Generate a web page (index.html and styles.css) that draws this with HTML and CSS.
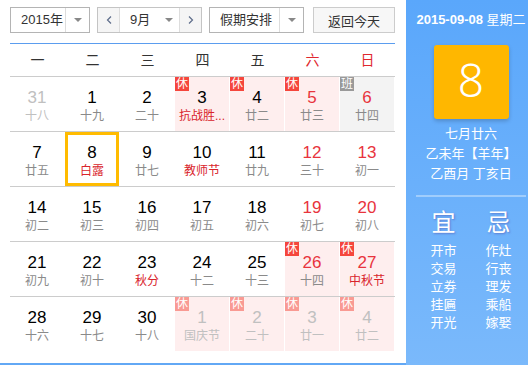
FILE: index.html
```html
<!DOCTYPE html>
<html lang="zh-CN">
<head>
    <meta charset="UTF-8">
    <meta name="viewport" content="width=device-width, initial-scale=1.0">
    <title>万年历</title>
    <link rel="stylesheet" href="styles.css">
</head>
<body>

<div class="calendar">
    <div class="main">
        <div class="toolbar">
            <div class="select year">
                <span class="value">2015年</span>
                <span class="arrow"><i class="caret"></i></span>
            </div>
            <div class="select month">
                <span class="step">
                    <svg width="6" height="10" viewBox="0 0 6 10"><polyline points="5,1.5 1.5,5 5,8.5" fill="none" stroke="#5d6c8a" stroke-width="1.2"/></svg>
                </span>
                <span class="value">9月<i class="caret"></i></span>
                <span class="step">
                    <svg width="6" height="10" viewBox="0 0 6 10"><polyline points="1,1.5 4.5,5 1,8.5" fill="none" stroke="#5d6c8a" stroke-width="1.2"/></svg>
                </span>
            </div>
            <div class="select holiday">
                <span class="value">假期安排</span>
                <span class="arrow"><i class="caret"></i></span>
            </div>
            <button class="today-btn">返回今天</button>
        </div>

        <div class="weekdays">
            <span>一</span><span>二</span><span>三</span><span>四</span><span>五</span>
            <span class="red">六</span><span class="red">日</span>
        </div>

        <!-- 第一周 -->
        <div class="week">
            <div class="day other"><div class="num">31</div><div class="lunar">十八</div></div>
            <div class="day"><div class="num">1</div><div class="lunar">十九</div></div>
            <div class="day"><div class="num">2</div><div class="lunar">二十</div></div>
            <div class="day rest"><span class="badge">休</span><div class="num">3</div><div class="lunar festival">抗战胜...</div></div>
            <div class="day rest"><span class="badge">休</span><div class="num">4</div><div class="lunar">廿二</div></div>
            <div class="day rest weekend"><span class="badge">休</span><div class="num">5</div><div class="lunar">廿三</div></div>
            <div class="day work weekend"><span class="badge">班</span><div class="num">6</div><div class="lunar">廿四</div></div>
        </div>

        <!-- 第二周 -->
        <div class="week">
            <div class="day"><div class="num">7</div><div class="lunar">廿五</div></div>
            <div class="day today"><div class="num">8</div><div class="lunar festival">白露</div></div>
            <div class="day"><div class="num">9</div><div class="lunar">廿七</div></div>
            <div class="day"><div class="num">10</div><div class="lunar festival">教师节</div></div>
            <div class="day"><div class="num">11</div><div class="lunar">廿九</div></div>
            <div class="day weekend"><div class="num">12</div><div class="lunar">三十</div></div>
            <div class="day weekend"><div class="num">13</div><div class="lunar">初一</div></div>
        </div>

        <!-- 第三周 -->
        <div class="week">
            <div class="day"><div class="num">14</div><div class="lunar">初二</div></div>
            <div class="day"><div class="num">15</div><div class="lunar">初三</div></div>
            <div class="day"><div class="num">16</div><div class="lunar">初四</div></div>
            <div class="day"><div class="num">17</div><div class="lunar">初五</div></div>
            <div class="day"><div class="num">18</div><div class="lunar">初六</div></div>
            <div class="day weekend"><div class="num">19</div><div class="lunar">初七</div></div>
            <div class="day weekend"><div class="num">20</div><div class="lunar">初八</div></div>
        </div>

        <!-- 第四周 -->
        <div class="week">
            <div class="day"><div class="num">21</div><div class="lunar">初九</div></div>
            <div class="day"><div class="num">22</div><div class="lunar">初十</div></div>
            <div class="day"><div class="num">23</div><div class="lunar festival">秋分</div></div>
            <div class="day"><div class="num">24</div><div class="lunar">十二</div></div>
            <div class="day"><div class="num">25</div><div class="lunar">十三</div></div>
            <div class="day rest weekend"><span class="badge">休</span><div class="num">26</div><div class="lunar">十四</div></div>
            <div class="day rest weekend"><span class="badge">休</span><div class="num">27</div><div class="lunar festival">中秋节</div></div>
        </div>

        <!-- 第五周 -->
        <div class="week">
            <div class="day"><div class="num">28</div><div class="lunar">十六</div></div>
            <div class="day"><div class="num">29</div><div class="lunar">十七</div></div>
            <div class="day"><div class="num">30</div><div class="lunar">十八</div></div>
            <div class="day rest other"><span class="badge">休</span><div class="num">1</div><div class="lunar">国庆节</div></div>
            <div class="day rest other"><span class="badge">休</span><div class="num">2</div><div class="lunar">二十</div></div>
            <div class="day rest other"><span class="badge">休</span><div class="num">3</div><div class="lunar">廿一</div></div>
            <div class="day rest other"><span class="badge">休</span><div class="num">4</div><div class="lunar">廿二</div></div>
        </div>
    </div>

    <div class="side">
        <div class="side-date"><b>2015-09-08</b> 星期二</div>
        <div class="big-day">8</div>
        <div class="lunar-info">
            <p>七月廿六</p>
            <p>乙未年【羊年】</p>
            <p>乙酉月 丁亥日</p>
        </div>
        <div class="divider"></div>
        <div class="yiji">
            <div class="yiji-col">
                <div class="yiji-title">宜</div>
                <div class="yiji-list">
                    <p>开市</p><p>交易</p><p>立券</p><p>挂匾</p><p>开光</p>
                </div>
            </div>
            <div class="yiji-col">
                <div class="yiji-title">忌</div>
                <div class="yiji-list">
                    <p>作灶</p><p>行丧</p><p>理发</p><p>乘船</p><p>嫁娶</p>
                </div>
            </div>
        </div>
    </div>
</div>

</body>
</html>
```

FILE: styles.css
```css
* {
    box-sizing: border-box;
}

body {
    margin: 0;
    width: 528px;
    height: 365px;
    overflow: hidden;
    background-color: #fff;
    font-family: "Liberation Sans", "Noto Sans CJK SC", sans-serif;
}

p {
    margin: 0;
}

.calendar {
    display: flex;
    height: 365px;
}

/* левая часть */
.main {
    width: 406px;
    padding: 0 11px 0 10px;
    border-bottom: 2px solid #62a8f5;
}

.toolbar {
    display: flex;
    align-items: flex-start;
    height: 44px;
    padding-top: 7px;
    border-bottom: 1px solid #5b9def;
}

.select {
    display: flex;
    height: 26px;
    border: 1px solid #b4b4b4;
    font-size: 13px;
    line-height: 24px;
    color: #333;
}

.select .value {
    padding-left: 10px;
}

.select .arrow {
    display: flex;
    align-items: center;
    justify-content: center;
    width: 24px;
    border-left: 1px solid #ddd;
}

.caret {
    display: inline-block;
    width: 0;
    height: 0;
    border-left: 4px solid transparent;
    border-right: 4px solid transparent;
    border-top: 4px solid #888;
}

.year {
    width: 80px;
    margin-right: 7px;
}

.year .value {
    width: 55px;
}

.month {
    width: 105px;
    margin-right: 7px;
    border-color: #c4c4c4;
}

.month .step {
    display: flex;
    align-items: center;
    justify-content: center;
    width: 21px;
    background-color: #f5f5f5;
}

.month .value {
    display: flex;
    align-items: center;
    justify-content: space-between;
    width: 61px;
    padding-right: 6px;
    border-left: 1px solid #ddd;
    border-right: 1px solid #ddd;
    background-color: #fff;
}

.holiday {
    width: 95px;
}

.holiday .value {
    width: 70px;
}

.today-btn {
    margin-left: auto;
    width: 82px;
    height: 26px;
    padding: 0;
    border: 1px solid #ccc;
    background-color: #f7f7f7;
    font-family: inherit;
    font-size: 13px;
    color: #333;
}

.weekdays {
    display: flex;
    height: 33px;
    border-bottom: 1px solid #ccc;
}

.weekdays span {
    width: 55px;
    text-align: center;
    font-size: 14px;
    line-height: 32px;
    color: #333;
}

.weekdays .red {
    color: #e0282e;
}

.week {
    display: flex;
    height: 55px;
    border-bottom: 1px solid #ccc;
}

.week:first-of-type {
    height: 56px;
}

.week:last-child {
    height: 54px;
    border-bottom: none;
}

.day {
    position: relative;
    width: 54px;
    margin-right: 1px;
    padding-top: 11px;
    text-align: center;
}

.day .num {
    font-size: 17px;
    line-height: 20px;
    color: #000;
}

.day .lunar {
    font-size: 12px;
    line-height: 16px;
    color: #8a8a8a;
    white-space: nowrap;
}

.day.weekend .num {
    color: #e8343d;
}

.day .festival {
    color: #d9242c;
}

.day.rest {
    background-color: #feeeee;
}

.day.work {
    background-color: #f3f3f3;
}

.day.other .num,
.day.other .lunar {
    color: #c0c0c0;
}

.day.today {
    border: 3px solid #ffbb00;
    padding-top: 8px;
}

.badge {
    position: absolute;
    top: 0;
    left: 0;
    width: 14px;
    height: 14px;
    font-size: 12px;
    line-height: 14px;
    color: #fff;
    background-color: #f5463c;
}

.work .badge {
    background-color: #999;
}

.other .badge {
    background-color: #f99a93;
}

/* правая панель */
.side {
    width: 122px;
    padding-left: 8px;
    background: linear-gradient(#5aa7fb, #7ab9fb);
    color: #fff;
    text-align: center;
}

.side-date {
    padding-top: 11px;
    font-size: 13px;
    line-height: 18px;
    white-space: nowrap;
}

.big-day {
    width: 75px;
    height: 74px;
    margin: 16px auto 0;
    border-radius: 3px;
    background-color: #ffb700;
    box-shadow: 0 2px 4px rgba(0, 0, 0, 0.2);
    font-family: "Noto Sans", sans-serif;
    font-weight: 300;
    font-size: 46px;
    line-height: 68px;
}

.lunar-info {
    margin-top: 5px;
    font-size: 13px;
    line-height: 20px;
    white-space: nowrap;
}

.divider {
    height: 2px;
    margin: 11px 2px 0;
    background-color: #a0cdfc;
}

.yiji {
    display: flex;
    margin: 0 2px;
}

.yiji-col {
    width: 55px;
}

.yiji-title {
    margin-top: 11px;
    font-size: 24px;
    line-height: 30px;
    text-shadow: 1px 1px 2px rgba(70, 60, 160, 0.45);
}

.yiji-list {
    margin-top: 4px;
    font-size: 13px;
    line-height: 18px;
}
```
